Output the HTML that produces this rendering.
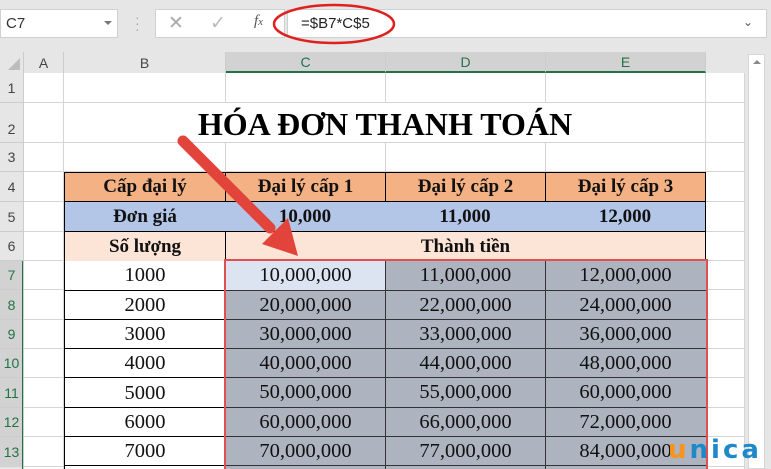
<!DOCTYPE html>
<html style="overflow:hidden;width:771px;height:469px"><head><meta charset="utf-8"><style>
*{margin:0;padding:0;box-sizing:border-box}
body{width:771px;height:469px;overflow:hidden;background:#e6e6e6;font-family:"Liberation Sans",sans-serif;position:relative}
.a{position:absolute}
.c{position:absolute;display:flex;align-items:center;justify-content:center;font-family:"Liberation Serif",serif;font-size:19px;color:#111}
.d{font-size:20.5px}
.b{font-weight:bold}
.hl{position:absolute;background:#d4d4d4;height:1px}
.vl{position:absolute;background:#d4d4d4;width:1px}
.rh{position:absolute;left:0;width:23px;font-size:14px;color:#444;display:flex;align-items:center;justify-content:center;background:#e6e6e6}
.ch{position:absolute;top:52px;height:21px;font-size:14px;color:#444;display:flex;align-items:center;justify-content:center;background:#e6e6e6;border-right:1px solid #ccc}
</style></head><body>
<div class="a" style="left:0;top:0;width:771px;height:44px;background:#e6e6e6"></div>
<div class="a" style="left:0;top:9px;width:118px;height:29px;background:#fff;border:1px solid #d0d0d0"></div>
<div class="a" style="left:6px;top:15px;font-size:15px;color:#333">C7</div>
<div class="a" style="left:104px;top:21px;width:0;height:0;border-left:4px solid transparent;border-right:4px solid transparent;border-top:4px solid #777"></div>
<div class="a" style="left:135px;top:14px;font-size:14px;color:#aaa;line-height:6px">·<br>·<br>·</div>
<div class="a" style="left:155px;top:9px;width:130px;height:29px;background:#fff;border:1px solid #d0d0d0"></div>
<div class="a" style="left:168px;top:12px;font-size:19px;color:#aaa">✕</div>
<div class="a" style="left:210px;top:12px;font-size:19px;color:#bbb">✓</div>
<div class="a" style="left:254px;top:13px;font-size:15px;color:#555;font-style:italic;font-family:'Liberation Serif',serif">f<span style="font-size:11px">x</span></div>
<div class="a" style="left:287px;top:9px;width:436px;height:29px;background:#fff;border:1px solid #d0d0d0;border-right:none"></div>
<div class="a" style="left:723px;top:9px;width:44px;height:29px;background:#fff;border:1px solid #d0d0d0;border-left:none"></div>
<div class="a" style="left:301px;top:15px;font-size:15px;color:#222">=$B7*C$5</div>
<div class="a" style="left:743px;top:15px;font-size:12px;color:#555">&#8964;</div>
<svg class="a" style="left:270px;top:2px" width="130" height="50"><ellipse cx="64" cy="22" rx="60" ry="19" fill="none" stroke="#e02020" stroke-width="2.5"/></svg>
<div class="a" style="left:24px;top:73px;width:721px;height:396px;background:#fff"></div>
<div class="a" style="left:745px;top:52px;width:26px;height:417px;background:#e6e6e6"></div>
<div class="a" style="left:748px;top:54px;width:17px;height:415px;background:#fff;border:1px solid #d6d6d6"></div>
<div class="a" style="left:753px;top:60px;width:0;height:0;border-left:4px solid transparent;border-right:4px solid transparent;border-bottom:4px solid #888"></div>
<div class="a" style="left:0;top:52px;width:24px;height:21px;background:#e6e6e6;border-right:1px solid #ccc"></div>
<div class="a" style="left:8px;top:58px;width:0;height:0;border-left:12px solid transparent;border-bottom:12px solid #bdbdbd"></div>
<div class="ch" style="left:24px;width:40px">A</div>
<div class="ch" style="left:64px;width:162px">B</div>
<div class="ch" style="left:226px;width:160px;background:#d2d2d2;color:#217346;border-bottom:2px solid #217346">C</div>
<div class="ch" style="left:386px;width:160px;background:#d2d2d2;color:#217346;border-bottom:2px solid #217346">D</div>
<div class="ch" style="left:546px;width:160px;background:#d2d2d2;color:#217346;border-bottom:2px solid #217346">E</div>
<div class="ch" style="left:706px;width:39px;border-right:none"></div>
<div class="rh" style="top:73px;height:30px;border-bottom:1px solid #ccc">1</div>
<div class="rh" style="top:103px;height:40px;border-bottom:1px solid #ccc;padding-top:12px">2</div>
<div class="rh" style="top:143px;height:29px;border-bottom:1px solid #ccc">3</div>
<div class="rh" style="top:172px;height:30px;border-bottom:1px solid #ccc">4</div>
<div class="rh" style="top:202px;height:30px;border-bottom:1px solid #ccc">5</div>
<div class="rh" style="top:232px;height:29px;border-bottom:1px solid #ccc">6</div>
<div class="rh" style="top:261px;height:29px;border-bottom:1px solid #ccc;background:#d2d2d2;color:#217346">7</div>
<div class="rh" style="top:290px;height:30px;border-bottom:1px solid #ccc;background:#d2d2d2;color:#217346">8</div>
<div class="rh" style="top:320px;height:29px;border-bottom:1px solid #ccc;background:#d2d2d2;color:#217346">9</div>
<div class="rh" style="top:349px;height:29px;border-bottom:1px solid #ccc;background:#d2d2d2;color:#217346">10</div>
<div class="rh" style="top:378px;height:30px;border-bottom:1px solid #ccc;background:#d2d2d2;color:#217346">11</div>
<div class="rh" style="top:408px;height:29px;border-bottom:1px solid #ccc;background:#d2d2d2;color:#217346">12</div>
<div class="rh" style="top:437px;height:30px;background:#d2d2d2;color:#217346">13</div>
<div class="a" style="left:22px;top:261px;width:2px;height:208px;background:#217346"></div>
<div class="a" style="left:23px;top:52px;width:1px;height:417px;background:#ccc"></div>
<div class="hl" style="left:24px;top:102px;width:721px"></div>
<div class="hl" style="left:24px;top:142px;width:721px"></div>
<div class="hl" style="left:24px;top:171px;width:721px"></div>
<div class="hl" style="left:24px;top:201px;width:40px"></div><div class="hl" style="left:706px;top:201px;width:39px"></div>
<div class="hl" style="left:24px;top:231px;width:40px"></div><div class="hl" style="left:706px;top:231px;width:39px"></div>
<div class="hl" style="left:24px;top:260px;width:40px"></div><div class="hl" style="left:706px;top:260px;width:39px"></div>
<div class="hl" style="left:24px;top:289px;width:40px"></div><div class="hl" style="left:706px;top:289px;width:39px"></div>
<div class="hl" style="left:24px;top:319px;width:40px"></div><div class="hl" style="left:706px;top:319px;width:39px"></div>
<div class="hl" style="left:24px;top:348px;width:40px"></div><div class="hl" style="left:706px;top:348px;width:39px"></div>
<div class="hl" style="left:24px;top:377px;width:40px"></div><div class="hl" style="left:706px;top:377px;width:39px"></div>
<div class="hl" style="left:24px;top:407px;width:40px"></div><div class="hl" style="left:706px;top:407px;width:39px"></div>
<div class="hl" style="left:24px;top:436px;width:40px"></div><div class="hl" style="left:706px;top:436px;width:39px"></div>
<div class="hl" style="left:24px;top:466px;width:40px"></div><div class="hl" style="left:706px;top:466px;width:39px"></div>
<div class="vl" style="left:63px;top:73px;height:396px"></div>
<div class="vl" style="left:225px;top:73px;height:30px"></div><div class="vl" style="left:225px;top:143px;height:29px"></div>
<div class="vl" style="left:385px;top:73px;height:30px"></div><div class="vl" style="left:385px;top:143px;height:29px"></div>
<div class="vl" style="left:545px;top:73px;height:30px"></div><div class="vl" style="left:545px;top:143px;height:29px"></div>
<div class="vl" style="left:705px;top:73px;height:99px"></div>
<div class="vl" style="left:744px;top:73px;height:396px"></div>
<div class="c b" style="left:64px;top:103px;width:642px;height:42px;font-size:32px;color:#000">HÓA ĐƠN THANH TOÁN</div>
<div class="c b" style="left:64px;top:172px;width:162px;height:30px;background:#f4b183;border:1px solid #000">Cấp đại lý</div>
<div class="c b" style="left:225px;top:172px;width:161px;height:30px;background:#f4b183;border:1px solid #000">Đại lý cấp 1</div>
<div class="c b" style="left:385px;top:172px;width:161px;height:30px;background:#f4b183;border:1px solid #000">Đại lý cấp 2</div>
<div class="c b" style="left:545px;top:172px;width:161px;height:30px;background:#f4b183;border:1px solid #000">Đại lý cấp 3</div>
<div class="c b" style="left:64px;top:202px;width:162px;height:30px;background:#b4c6e7;border-right:1px solid #000;border-left:1px solid #000">Đơn giá</div>
<div class="c b" style="left:225px;top:202px;width:161px;height:30px;background:#b4c6e7;border-right:1px solid #000">10,000</div>
<div class="c b" style="left:385px;top:202px;width:161px;height:30px;background:#b4c6e7;border-right:1px solid #000">11,000</div>
<div class="c b" style="left:545px;top:202px;width:161px;height:30px;background:#b4c6e7;border-right:1px solid #000">12,000</div>
<div class="c b" style="left:64px;top:231px;width:162px;height:30px;background:#fce4d6;border:1px solid #000;border-bottom:none">Số lượng</div>
<div class="c b" style="left:225px;top:231px;width:481px;height:30px;background:#fce4d6;border:1px solid #000;border-bottom:none">Thành tiền</div>
<div class="c d" style="left:64px;top:261px;width:162px;height:29px;border:1px solid #000;border-top:none;border-bottom:none;">1000</div>
<div class="c d" style="left:225px;top:261px;width:161px;height:29px;background:#dde4f1">10,000,000</div>
<div class="c d" style="left:385px;top:261px;width:161px;height:29px;background:#adb3bf">11,000,000</div>
<div class="c d" style="left:545px;top:261px;width:161px;height:29px;background:#adb3bf">12,000,000</div>
<div class="c d" style="left:64px;top:290px;width:162px;height:30px;border-left:1px solid #000;border-right:1px solid #000;border-top:1px solid #000">2000</div>
<div class="c" style="left:225px;top:290px;width:481px;height:30px;background:#adb3bf;border-top:1px solid #333"></div>
<div class="c d" style="left:225px;top:290px;width:161px;height:30px">20,000,000</div>
<div class="c d" style="left:385px;top:290px;width:161px;height:30px">22,000,000</div>
<div class="c d" style="left:545px;top:290px;width:161px;height:30px">24,000,000</div>
<div class="c d" style="left:64px;top:319px;width:162px;height:30px;border-left:1px solid #000;border-right:1px solid #000;border-top:1px solid #000">3000</div>
<div class="c" style="left:225px;top:319px;width:481px;height:30px;background:#adb3bf;border-top:1px solid #333"></div>
<div class="c d" style="left:225px;top:319px;width:161px;height:30px">30,000,000</div>
<div class="c d" style="left:385px;top:319px;width:161px;height:30px">33,000,000</div>
<div class="c d" style="left:545px;top:319px;width:161px;height:30px">36,000,000</div>
<div class="c d" style="left:64px;top:348px;width:162px;height:30px;border-left:1px solid #000;border-right:1px solid #000;border-top:1px solid #000">4000</div>
<div class="c" style="left:225px;top:348px;width:481px;height:30px;background:#adb3bf;border-top:1px solid #333"></div>
<div class="c d" style="left:225px;top:348px;width:161px;height:30px">40,000,000</div>
<div class="c d" style="left:385px;top:348px;width:161px;height:30px">44,000,000</div>
<div class="c d" style="left:545px;top:348px;width:161px;height:30px">48,000,000</div>
<div class="c d" style="left:64px;top:377px;width:162px;height:31px;border-left:1px solid #000;border-right:1px solid #000;border-top:1px solid #000">5000</div>
<div class="c" style="left:225px;top:377px;width:481px;height:31px;background:#adb3bf;border-top:1px solid #333"></div>
<div class="c d" style="left:225px;top:377px;width:161px;height:31px">50,000,000</div>
<div class="c d" style="left:385px;top:377px;width:161px;height:31px">55,000,000</div>
<div class="c d" style="left:545px;top:377px;width:161px;height:31px">60,000,000</div>
<div class="c d" style="left:64px;top:407px;width:162px;height:30px;border-left:1px solid #000;border-right:1px solid #000;border-top:1px solid #000">6000</div>
<div class="c" style="left:225px;top:407px;width:481px;height:30px;background:#adb3bf;border-top:1px solid #333"></div>
<div class="c d" style="left:225px;top:407px;width:161px;height:30px">60,000,000</div>
<div class="c d" style="left:385px;top:407px;width:161px;height:30px">66,000,000</div>
<div class="c d" style="left:545px;top:407px;width:161px;height:30px">72,000,000</div>
<div class="c d" style="left:64px;top:436px;width:162px;height:30px;border-left:1px solid #000;border-right:1px solid #000;border-top:1px solid #000;border-bottom:1px solid #000">7000</div>
<div class="c" style="left:225px;top:436px;width:481px;height:30px;background:#adb3bf;border-top:1px solid #333;border-bottom:1px solid #333"></div>
<div class="c d" style="left:225px;top:436px;width:161px;height:30px">70,000,000</div>
<div class="c d" style="left:385px;top:436px;width:161px;height:30px">77,000,000</div>
<div class="c d" style="left:545px;top:436px;width:161px;height:30px">84,000,000</div>
<div class="c" style="left:64px;top:466px;width:162px;height:3px;border-left:1px solid #000;border-right:1px solid #000"></div>
<div class="c" style="left:225px;top:466px;width:481px;height:3px;background:#adb3bf"></div>
<div class="a" style="left:385px;top:261px;width:1px;height:208px;background:#333"></div>
<div class="a" style="left:545px;top:261px;width:1px;height:208px;background:#333"></div>
<div class="a" style="left:224px;top:259px;width:2px;height:210px;background:#e05050"></div>
<div class="a" style="left:706px;top:259px;width:2px;height:210px;background:#e05050"></div>
<div class="a" style="left:224px;top:259px;width:484px;height:2px;background:#e05050"></div>
<svg class="a" style="left:0;top:0" width="771" height="469"><line x1="183" y1="141" x2="270" y2="228" stroke="#e2443c" stroke-width="11" stroke-linecap="round"/><polygon points="262,244 288,218 298,256" fill="#e2443c"/></svg>
<div class="a" style="left:668px;top:437px;font-family:'DejaVu Sans',sans-serif;font-size:26px;font-weight:bold;letter-spacing:3px;line-height:1;color:#1e88c8"><span style="color:#f7941d">u</span>nica</div>
</body></html>
